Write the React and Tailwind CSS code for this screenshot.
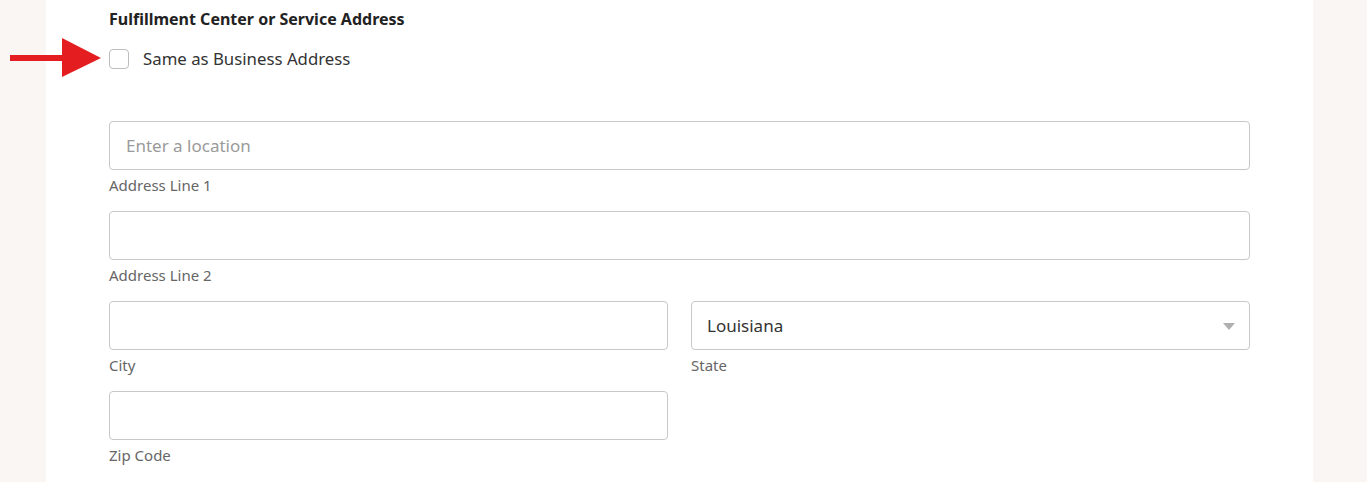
import React from 'react';

function Field({ label, placeholder, value, select }) {
  return (
    <div className="flex flex-col flex-1">
      <div className="relative">
        {select ? (
          <div className="h-[49px] w-full rounded-[4px] border border-[#c8c8c8] bg-white pl-[15px] flex items-center text-[17px] text-[#333]">
            {value}
            <svg className="absolute right-[15px] top-[22px]" width="12" height="7" viewBox="0 0 12 7">
              <path d="M0 0 L12 0 L6 7 Z" fill="#b0b0b0" />
            </svg>
          </div>
        ) : (
          <input
            className="h-[49px] w-full rounded-[4px] border border-[#c8c8c8] bg-white px-[16px] text-[17px] text-[#333] placeholder-[#9a9a9a] outline-none"
            placeholder={placeholder}
            defaultValue={value}
          />
        )}
      </div>
      <div className="mt-[4px] mb-[15px] leading-[22px] text-[15px] text-[#666]">{label}</div>
    </div>
  );
}

export default function App() {
  return (
    <div className="relative w-[1367px] h-[482px] bg-[#f9f6f3] overflow-hidden" style={{ fontFamily: '"Noto Sans", "Open Sans", sans-serif' }}>
      {/* red annotation arrow */}
      <svg className="absolute left-[10px] top-[38px]" width="92" height="40" viewBox="0 0 92 40">
        <rect x="0" y="17" width="56" height="6" fill="#e41e20" />
        <path d="M52 0 L91 20 L52 39 Z" fill="#e41e20" />
      </svg>

      <div className="ml-[46px] w-[1267px] h-full bg-white pl-[63px] pr-[63px] pt-[7px]">
        <div className="text-[16px] font-bold leading-[24px] text-[#222]">Fulfillment Center or Service Address</div>
        <label className="mt-[16px] flex items-center gap-[14px]">
          <span className="w-[20px] h-[20px] rounded-[4px] border border-[#bdbdbd] bg-white" />
          <span className="text-[16.8px] text-[#333] leading-[24px]">Same as Business Address</span>
        </label>

        <div className="mt-[50px] flex flex-col">
          <Field label="Address Line 1" placeholder="Enter a location" />
          <Field label="Address Line 2" />
          <div className="flex gap-[23px]">
            <Field label="City" />
            <Field label="State" value="Louisiana" select />
          </div>
          <div className="flex gap-[23px]">
            <Field label="Zip Code" />
            <div className="flex-1" />
          </div>
        </div>
      </div>
    </div>
  );
}
